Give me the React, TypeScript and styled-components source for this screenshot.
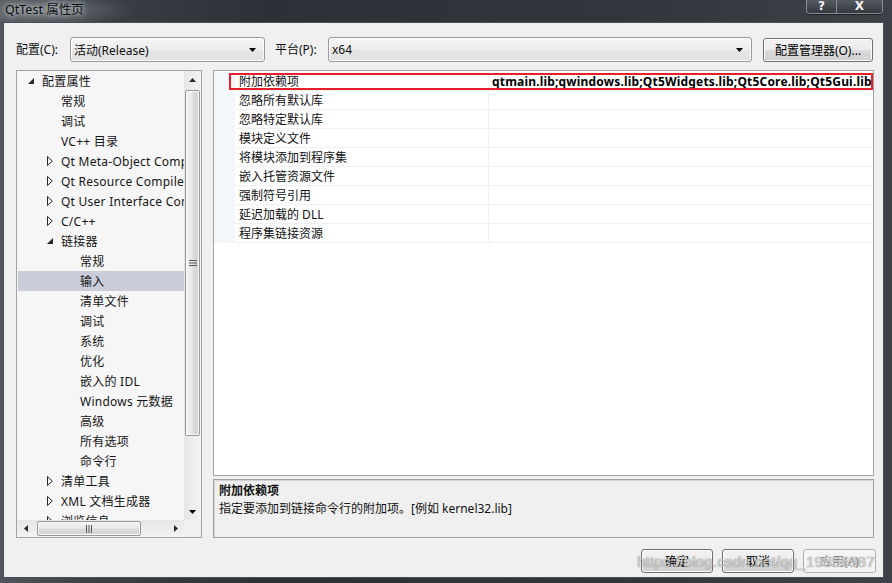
import React from "react";
import styled, { createGlobalStyle } from "styled-components";

const FONT = `"Noto Sans", "Noto Sans CJK SC", sans-serif`;

const GlobalStyle = createGlobalStyle`
  html, body { margin: 0; padding: 0; background: #2a2f34; }
  body { width: 892px; height: 583px; overflow: hidden; }
  * { box-sizing: border-box; }
`;

const Window = styled.div`
  position: relative;
  width: 892px;
  height: 583px;
  display: flex;
  flex-direction: column;
  background: linear-gradient(90deg, #50565c 0%, #3a4046 10%, #2b3137 30%, #30363c 70%, #3c4248 100%);
  font-family: ${FONT};
  font-size: 12px;
  color: #111;
  overflow: hidden;
`;

const TitleBar = styled.div`
  height: 22px;
  flex: none;
  display: flex;
  align-items: flex-start;
  padding: 0 9px 0 5px;
  background: radial-gradient(ellipse 90px 18px at 45px 10px, rgba(150, 156, 162, 0.55), rgba(150, 156, 162, 0) 100%);
`;

const Title = styled.div`
  margin-top: 1px;
  line-height: 17px;
  font-size: 12.5px;
  color: #0c0e10;
  text-shadow: 0 0 4px rgba(225, 228, 232, 0.9), 0 0 8px rgba(200, 205, 210, 0.8);
`;

const CaptionGroup = styled.div`
  margin-left: auto;
  display: flex;
  height: 14px;
  border: 1px solid #868c92;
  border-top: none;
  border-radius: 0 0 4px 4px;
  overflow: hidden;
  box-shadow: 0 1px 0 rgba(0, 0, 0, 0.5);
`;

const CaptionButton = styled.div<{ $w: number }>`
  width: ${(p) => p.$w}px;
  height: 100%;
  display: flex;
  align-items: center;
  justify-content: center;
  color: #f4f4f4;
  font-weight: bold;
  font-size: 12px;
  line-height: 13px;
  font-family: "DejaVu Sans", sans-serif;
  background: linear-gradient(#555b61, #34393f);
  & + & {
    border-left: 1px solid #868c92;
  }
`;

const Client = styled.div`
  flex: 1;
  margin: 0 8px 5px 3px;
  background: #f0f0f0;
  border: 1px solid #4a4f55;
  display: flex;
  flex-direction: column;
  padding-top: 14px;
  position: relative;
`;

const Toolbar = styled.div`
  display: flex;
  align-items: center;
  height: 25px;
  padding-left: 12px;
`;

const FieldLabel = styled.div<{ $w: number; $ml?: number }>`
  width: ${(p) => p.$w}px;
  margin-left: ${(p) => p.$ml ?? 0}px;
  line-height: 25px;
  white-space: nowrap;
`;

const Combo = styled.div<{ $w: number }>`
  width: ${(p) => p.$w}px;
  height: 25px;
  border: 1px solid #9a9a9a;
  border-radius: 3px;
  background: linear-gradient(#f6f6f6, #ededed 50%, #e6e6e6 51%, #e0e0e0);
  box-shadow: inset 0 0 0 1px #fbfbfb;
  display: flex;
  align-items: center;
  padding: 0 8px 0 3px;
`;

const ComboText = styled.span`
  flex: 1;
  white-space: nowrap;
`;

const PushButton = styled.div<{ $w: number; $disabled?: boolean; $ml?: number }>`
  width: ${(p) => p.$w}px;
  height: 24px;
  margin-left: ${(p) => p.$ml ?? 0}px;
  border: 1px solid ${(p) => (p.$disabled ? "#adb2b5" : "#707070")};
  border-radius: 3px;
  background: ${(p) =>
    p.$disabled
      ? "#f4f4f4"
      : "linear-gradient(#f2f2f2 0%, #ebebeb 50%, #dddddd 51%, #cfcfcf 100%)"};
  box-shadow: ${(p) => (p.$disabled ? "none" : "inset 0 0 0 1px #fcfcfc")};
  color: ${(p) => (p.$disabled ? "#838383" : "#000")};
  display: flex;
  align-items: center;
  justify-content: center;
  white-space: nowrap;
  flex: none;
`;

const Main = styled.div`
  display: flex;
  margin-top: 8px;
  padding-left: 12px;
  gap: 11px;
`;

const TreePanel = styled.div`
  width: 186px;
  height: 468px;
  border: 1px solid #a3a3a3;
  background: #f6f6f6;
  display: grid;
  grid-template-columns: 1fr 17px;
  grid-template-rows: 1fr 17px;
  flex: none;
`;

const TreeContent = styled.div`
  overflow: hidden;
  min-width: 0;
  min-height: 0;
  padding-left: 1px;
`;

const TreeRow = styled.div<{ $level: number; $selected?: boolean }>`
  height: 20px;
  display: flex;
  align-items: center;
  padding-left: ${(p) => 5 + 19 * p.$level}px;
  background: ${(p) => (p.$selected ? "#c9ccd9" : "transparent")};
  white-space: nowrap;
  color: #151515;
  letter-spacing: 0.25px;
`;

const ArrowBox = styled.span`
  width: 19px;
  flex: none;
  display: flex;
  align-items: center;
  padding-left: 5px;
`;

const VScroll = styled.div`
  display: flex;
  flex-direction: column;
  background: linear-gradient(90deg, #e6e6e6, #f3f3f3);
`;

const HScroll = styled.div`
  display: flex;
  background: linear-gradient(#e6e6e6, #f3f3f3);
`;

const ScrollArrow = styled.div`
  width: 17px;
  height: 17px;
  flex: none;
  display: flex;
  align-items: center;
  justify-content: center;
`;

const VTrack = styled.div`
  flex: 1;
  padding: 2px 1px 0 1px;
`;

const HTrack = styled.div`
  flex: 1;
  padding: 1px 0 1px 3px;
`;

const Thumb = styled.div<{ $vertical?: boolean }>`
  border: 1px solid #979797;
  border-radius: 2px;
  background: ${(p) =>
    p.$vertical
      ? "linear-gradient(90deg, #f3f3f3 0%, #e9e9e9 45%, #dcdcdc 55%, #d2d2d2 100%)"
      : "linear-gradient(#f3f3f3 0%, #e9e9e9 45%, #dcdcdc 55%, #d2d2d2 100%)"};
  box-shadow: inset 0 0 0 1px #f8f8f8;
  display: flex;
  align-items: center;
  justify-content: center;
`;

const VThumb = styled(Thumb)`
  height: 346px;
`;

const HThumb = styled(Thumb)`
  width: 104px;
  height: 100%;
`;

const Corner = styled.div`
  background: #f0f0f0;
`;

const RightColumn = styled.div`
  width: 661px;
  display: flex;
  flex-direction: column;
  gap: 3px;
`;

const GridPanel = styled.div`
  height: 406px;
  border: 1px solid #a3a3a3;
  background: #fff;
  padding-top: 1px;
`;

const PropRow = styled.div`
  position: relative;
  display: flex;
  height: 19px;
`;

const Gutter = styled.div`
  width: 21px;
  flex: none;
  background: #f3f6fb;
`;

const NameCell = styled.div`
  width: 254px;
  flex: none;
  padding-left: 4px;
  line-height: 20px;
  border-bottom: 1px solid #f0f0f0;
  border-right: 1px solid #f0f0f0;
  white-space: nowrap;
  overflow: hidden;
`;

const ValueCell = styled.div<{ $bold?: boolean }>`
  flex: 1;
  min-width: 0;
  padding-left: 3px;
  line-height: 20px;
  border-bottom: 1px solid #f0f0f0;
  white-space: nowrap;
  overflow: hidden;
  font-weight: ${(p) => (p.$bold ? 700 : 400)};
  letter-spacing: ${(p) => (p.$bold ? "0.18px" : "0")};
  color: #000;
`;

const Highlight = styled.div`
  position: absolute;
  left: 15px;
  right: 0;
  top: 1px;
  height: 17px;
  border: 2px solid #e3202b;
  pointer-events: none;
`;

const DescPanel = styled.div`
  height: 59px;
  border: 1px solid #a0a0a0;
  box-shadow: inset 1px 1px 0 #d4d4d4;
  background: #f0f0f0;
  padding: 2px 0 0 5px;
  line-height: 18px;
`;

const DescTitle = styled.div`
  font-weight: 700;
`;

const Footer = styled.div`
  display: flex;
  justify-content: flex-end;
  gap: 9px;
  margin-top: 11px;
  padding-right: 7px;
`;

const Watermark = styled.div`
  position: absolute;
  left: 637px;
  top: 553px;
  font-family: "Liberation Sans", Arial, sans-serif;
  font-size: 15.5px;
  color: rgba(250, 250, 250, 0.65);
  text-shadow: 0 0 1px rgba(100, 100, 100, 0.7), 0 0 1px rgba(100, 100, 100, 0.5);
  pointer-events: none;
  white-space: nowrap;
`;

const DownArrow = () => (
  <svg width="7" height="4" viewBox="0 0 7 4">
    <polygon points="0,0 7,0 3.5,4" fill="#000" />
  </svg>
);

const UpArrow = () => (
  <svg width="7" height="4" viewBox="0 0 7 4">
    <polygon points="0,4 7,4 3.5,0" fill="#2a2a2a" />
  </svg>
);

const LeftArrow = () => (
  <svg width="4" height="7" viewBox="0 0 4 7">
    <polygon points="4,0 4,7 0,3.5" fill="#2a2a2a" />
  </svg>
);

const RightArrow = () => (
  <svg width="4" height="7" viewBox="0 0 4 7">
    <polygon points="0,0 0,7 4,3.5" fill="#2a2a2a" />
  </svg>
);

const OpenTri = () => (
  <svg width="6" height="6" viewBox="0 0 6 6">
    <polygon points="6,0 6,6 0,6" fill="#262626" />
  </svg>
);

const ClosedTri = () => (
  <svg width="6" height="10" viewBox="0 0 6 10">
    <polygon points="0.5,0.5 5.3,5 0.5,9.5" fill="#fff" stroke="#262626" strokeWidth="1" />
  </svg>
);

const VGrip = () => (
  <svg width="8" height="6" viewBox="0 0 8 6">
    <rect x="0" y="0" width="8" height="1" fill="#555" />
    <rect x="0" y="2.5" width="8" height="1" fill="#555" />
    <rect x="0" y="5" width="8" height="1" fill="#555" />
  </svg>
);

const HGrip = () => (
  <svg width="6" height="8" viewBox="0 0 6 8">
    <rect x="0" y="0" width="1" height="8" fill="#555" />
    <rect x="2.5" y="0" width="1" height="8" fill="#555" />
    <rect x="5" y="0" width="1" height="8" fill="#555" />
  </svg>
);

type TreeItem = { label: string; level: number; arrow?: "open" | "closed"; selected?: boolean };

const treeItems: TreeItem[] = [
  { label: "配置属性", level: 0, arrow: "open" },
  { label: "常规", level: 1 },
  { label: "调试", level: 1 },
  { label: "VC++ 目录", level: 1 },
  { label: "Qt Meta-Object Compiler", level: 1, arrow: "closed" },
  { label: "Qt Resource Compiler", level: 1, arrow: "closed" },
  { label: "Qt User Interface Compiler", level: 1, arrow: "closed" },
  { label: "C/C++", level: 1, arrow: "closed" },
  { label: "链接器", level: 1, arrow: "open" },
  { label: "常规", level: 2 },
  { label: "输入", level: 2, selected: true },
  { label: "清单文件", level: 2 },
  { label: "调试", level: 2 },
  { label: "系统", level: 2 },
  { label: "优化", level: 2 },
  { label: "嵌入的 IDL", level: 2 },
  { label: "Windows 元数据", level: 2 },
  { label: "高级", level: 2 },
  { label: "所有选项", level: 2 },
  { label: "命令行", level: 2 },
  { label: "清单工具", level: 1, arrow: "closed" },
  { label: "XML 文档生成器", level: 1, arrow: "closed" },
  { label: "浏览信息", level: 1, arrow: "closed" },
];

const props: { name: string; value?: string }[] = [
  { name: "附加依赖项", value: "qtmain.lib;qwindows.lib;Qt5Widgets.lib;Qt5Core.lib;Qt5Gui.lib;" },
  { name: "忽略所有默认库" },
  { name: "忽略特定默认库" },
  { name: "模块定义文件" },
  { name: "将模块添加到程序集" },
  { name: "嵌入托管资源文件" },
  { name: "强制符号引用" },
  { name: "延迟加载的 DLL" },
  { name: "程序集链接资源" },
];

export default function App() {
  return (
    <>
      <GlobalStyle />
      <Window>
        <TitleBar>
          <Title>QtTest 属性页</Title>
          <CaptionGroup>
            <CaptionButton $w={29}>?</CaptionButton>
            <CaptionButton $w={46}>X</CaptionButton>
          </CaptionGroup>
        </TitleBar>
        <Client>
          <Toolbar>
            <FieldLabel $w={54}>配置(C):</FieldLabel>
            <Combo $w={195}>
              <ComboText>活动(Release)</ComboText>
              <DownArrow />
            </Combo>
            <FieldLabel $w={53} $ml={10}>平台(P):</FieldLabel>
            <Combo $w={424}>
              <ComboText>x64</ComboText>
              <DownArrow />
            </Combo>
            <PushButton $w={110} $ml={11}>配置管理器(O)...</PushButton>
          </Toolbar>
          <Main>
            <TreePanel>
              <TreeContent>
                {treeItems.map((t, i) => (
                  <TreeRow key={i} $level={t.level} $selected={t.selected}>
                    <ArrowBox>
                      {t.arrow === "open" ? <OpenTri /> : t.arrow === "closed" ? <ClosedTri /> : null}
                    </ArrowBox>
                    {t.label}
                  </TreeRow>
                ))}
              </TreeContent>
              <VScroll>
                <ScrollArrow>
                  <UpArrow />
                </ScrollArrow>
                <VTrack>
                  <VThumb $vertical>
                    <VGrip />
                  </VThumb>
                </VTrack>
                <ScrollArrow>
                  <DownArrow />
                </ScrollArrow>
              </VScroll>
              <HScroll>
                <ScrollArrow>
                  <LeftArrow />
                </ScrollArrow>
                <HTrack>
                  <HThumb>
                    <HGrip />
                  </HThumb>
                </HTrack>
                <ScrollArrow>
                  <RightArrow />
                </ScrollArrow>
              </HScroll>
              <Corner />
            </TreePanel>
            <RightColumn>
              <GridPanel>
                {props.map((p, i) => (
                  <PropRow key={i}>
                    <Gutter />
                    <NameCell>{p.name}</NameCell>
                    <ValueCell $bold={!!p.value}>{p.value ?? ""}</ValueCell>
                    {i === 0 && <Highlight />}
                  </PropRow>
                ))}
              </GridPanel>
              <DescPanel>
                <DescTitle>附加依赖项</DescTitle>
                <div>指定要添加到链接命令行的附加项。[例如 kernel32.lib]</div>
              </DescPanel>
            </RightColumn>
          </Main>
          <Footer>
            <PushButton $w={72}>确定</PushButton>
            <PushButton $w={72}>取消</PushButton>
            <PushButton $w={73} $disabled>应用(A)</PushButton>
          </Footer>
        </Client>
        <Watermark>https://blog.csdn.net/qq_19556987</Watermark>
      </Window>
    </>
  );
}
